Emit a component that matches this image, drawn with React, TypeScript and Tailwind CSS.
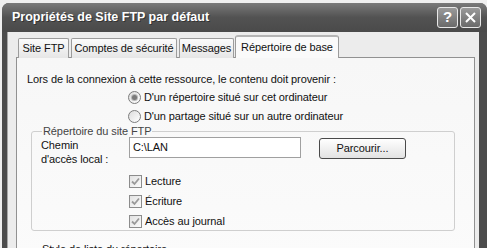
import React from "react";

const tabs = [
  { label: "Site FTP", w: "w-[51px]" },
  { label: "Comptes de sécurité", w: "w-[106px]" },
  { label: "Messages", w: "w-[55px]" },
];

const Radio = ({ checked, label }: { checked?: boolean; label: string }) => {
  return (
    <div className="flex items-center h-[19px]">
      <span className="w-[13px] h-[13px] rounded-full border border-[#7c7c7c] bg-gradient-to-br from-[#dcdcdc] to-[#ffffff] flex items-center justify-center">
        {checked && (
          <span className="w-[5px] h-[5px] rounded-full bg-[#7a7a7a] ring-1 ring-[#b8b8b8]" />
        )}
      </span>
      <span className="ml-[3px]">{label}</span>
    </div>
  );
};

const Check = ({ label }: { label: string }) => {
  return (
    <div className="flex items-center h-[20px]">
      <span className="w-[13px] h-[13px] border border-[#8c8c8c] bg-gradient-to-br from-[#e2e2e2] to-[#fbfbfb] flex items-center justify-center">
        <svg width="9" height="9" viewBox="0 0 9 9">
          <path
            d="M1 4.5 L3.5 7 L8 1.5"
            fill="none"
            stroke="#9a9a9a"
            strokeWidth="1.8"
          />
        </svg>
      </span>
      <span className="ml-[3px]">{label}</span>
    </div>
  );
};

export default function App() {
  return (
    <div className="w-[487px] h-[248px] overflow-hidden bg-[#efefef] font-['Liberation_Sans',Arial,sans-serif] text-[11px] tracking-[-0.1px] text-[#111]">
      <div className="ml-[2px] mt-[3px] w-[485px] h-[260px] rounded-t-[7px] bg-[#4c4c4c] flex flex-col">
        {/* title bar */}
        <div className="h-[29px] shrink-0 rounded-t-[7px] bg-gradient-to-b from-[#7a7a7a] via-[#525252] to-[#4a4a4a] flex items-center pl-[10px] pr-[5px]">
          <span className="text-white font-bold text-[12.5px] tracking-normal [text-shadow:1px_1px_0_#333]">
            Propriétés de Site FTP par défaut
          </span>
          <div className="ml-auto flex gap-[2px] pr-[1px]">
            <span className="w-[21px] h-[21px] rounded-[3px] border border-[#e8e8e8] bg-gradient-to-b from-[#9a9a9a] to-[#6a6a6a] text-white font-bold text-[15px] flex items-center justify-center">
              ?
            </span>
            <span className="w-[21px] h-[21px] rounded-[3px] border border-[#e8e8e8] bg-gradient-to-b from-[#9a9a9a] to-[#6a6a6a] flex items-center justify-center">
              <svg width="11" height="11" viewBox="0 0 11 11">
                <path d="M1 1 L10 10 M10 1 L1 10" stroke="white" strokeWidth="2" />
              </svg>
            </span>
          </div>
        </div>
        {/* body */}
        <div className="flex-1 ml-[5px] mr-[8px] bg-[#ececec] border-l border-[#a8a8a8] pt-[3px]">
          <div className="flex items-end ml-[8px] pl-[2px] gap-[2px] h-[23px] relative z-10">
            {tabs.map((t) => (
              <div
                key={t.label}
                className={`${t.w} h-[20px] whitespace-nowrap border border-b-0 border-[#9c9c9c] rounded-t-[2px] bg-gradient-to-b from-[#fbfbfb] to-[#e6e6e6] flex items-center justify-center`}
              >
                {t.label}
              </div>
            ))}
            <div className="w-[104px] h-[23px] -ml-[1px] whitespace-nowrap border border-b-0 border-[#9c9c9c] rounded-t-[3px] bg-[#fafafa] border-t-2 border-t-[#b5b5b5] flex items-center justify-center">
              Répertoire de base
            </div>
          </div>
          <div className="ml-[8px] mr-[4px] -mt-[1px] h-[200px] border border-[#919191] bg-gradient-to-b from-[#f7f7f7] to-[#fbfbfb] pl-[10px] pt-[14px]">
            <div className="leading-[14px]">
              Lors de la connexion à cette ressource, le contenu doit provenir :
            </div>
            <div className="ml-[101px] mt-[2px]">
              <Radio checked label="D'un répertoire situé sur cet ordinateur" />
              <Radio label="D'un partage situé sur un autre ordinateur" />
            </div>
            <fieldset className="ml-[4px] w-[424px] h-[106px] -mt-[1px] border border-[#cfcfcf] rounded-[3px] px-[9px]">
              <legend className="ml-[1px] px-[1px] text-[#444] leading-[13px]">
                Répertoire du site FTP
              </legend>
              <div className="flex items-start -mt-[1px]">
                <div className="w-[88px] leading-[14px] pt-[1px]">
                  Chemin
                  <br />
                  d'accès local :
                </div>
                <div className="w-[172px] h-[21px] border border-[#a0a0a0] bg-white pl-[3px] flex items-center">
                  C:\LAN
                </div>
                <div className="ml-[18px] mt-[1px] w-[87px] h-[21px] rounded-[3px] border border-[#4a4a4a] bg-gradient-to-b from-[#ffffff] to-[#e2e2e2] flex items-center justify-center">
                  Parcourir...
                </div>
              </div>
              <div className="ml-[88px] mt-[5px]">
                <Check label="Lecture" />
                <Check label="Écriture" />
                <Check label="Accès au journal" />
              </div>
            </fieldset>
            <div className="ml-[15px] mt-[11px] leading-[14px]">Style de liste du répertoire</div>
          </div>
        </div>
      </div>
    </div>
  );
}
